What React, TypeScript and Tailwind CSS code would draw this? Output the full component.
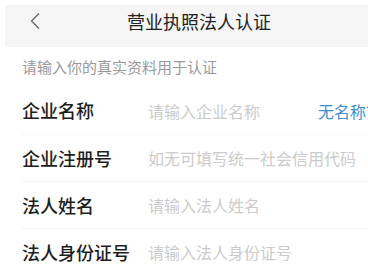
import React from "react";

const rows = [
  { label: "企业名称", ph: "请输入企业名称", extra: "无名称？" },
  { label: "企业注册号", ph: "如无可填写统一社会信用代码" },
  { label: "法人姓名", ph: "请输入法人姓名" },
  { label: "法人身份证号", ph: "请输入法人身份证号" },
];

export default function App() {
  return (
    <div
      className="w-[368px] h-[266px] bg-white overflow-hidden"
      style={{ fontFamily: '"Noto Sans CJK SC", "Noto Sans", sans-serif' }}
    >
      <div className="pl-[5px] pt-[5px]">
        <div className="h-[42px] bg-[#f5f5f5] flex items-start pt-[6px]">
          <svg width="12" height="18" viewBox="0 0 12 18" className="ml-[24px] mt-[1px] shrink-0">
            <path d="M10 1.5 L2.5 9 L10 16.5" fill="none" stroke="#666" strokeWidth="1.3" />
          </svg>
          <div className="ml-[86px] text-[18px] leading-[20px] text-[#222] whitespace-nowrap">
            营业执照法人认证
          </div>
        </div>
      </div>
      <div className="h-[40px] flex items-center pl-[22px] text-[15px] text-[#999] whitespace-nowrap">
        请输入你的真实资料用于认证
      </div>
      <div className="ml-[22px]">
        {rows.map((r, i) => (
          <div
            key={r.label}
            className={`h-[47px] flex items-center whitespace-nowrap ${i > 0 ? "border-t border-[#f4f4f4]" : ""}`}
          >
            <div className="w-[126px] shrink-0 text-[18px] font-medium text-[#1e1e1e]">{r.label}</div>
            <div className="w-[170px] shrink-0 text-[16px] text-[#cbcbcb]">{r.ph}</div>
            {r.extra && <div className="shrink-0 text-[16px] text-[#3c8fce]">{r.extra}</div>}
          </div>
        ))}
      </div>
    </div>
  );
}
